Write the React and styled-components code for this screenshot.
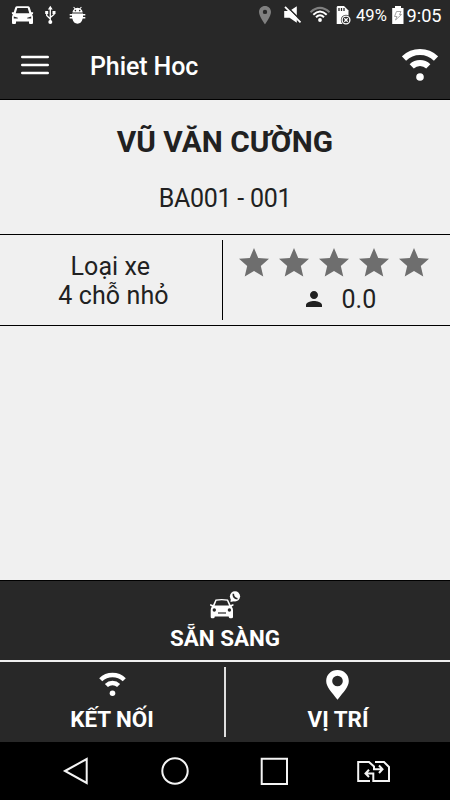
import React from 'react';
import styled, { createGlobalStyle } from 'styled-components';

const GlobalStyle = createGlobalStyle`
  * { box-sizing: border-box; }
  body {
    margin: 0;
    background: #000;
    font-family: Roboto, "Noto Sans", sans-serif;
  }
  svg { display: block; flex: none; }
`
const Screen = styled.div`
  width: 450px;
  height: 800px;
  display: flex;
  flex-direction: column;
  background: #f0f0f0;
  color: #212121;
  overflow: hidden;
`
const StatusBar = styled.div`
  height: 32px;
  display: flex;
  align-items: center;
  padding: 0 8px 2px 11px;
  background: #282828;
  color: #fff;
`
const StatusIcon = styled.svg`
  margin-left: ${props => props.$gap || 0}px;
`
const StatusText = styled.span`
  width: ${props => props.$width}px;
  margin-left: ${props => props.$gap}px;
  font-size: ${props => props.$size}px;
  line-height: 30px;
  padding-top: 2px;
  white-space: nowrap;
`
const Header = styled.header`
  height: 68px;
  display: flex;
  align-items: center;
  padding: 0 12px 1px 20px;
  background: #282828;
  border-bottom: 1px solid #000;
`
const Title = styled.h1`
  flex: 1;
  margin: 4px 0 0 40px;
  color: #fff;
  font-size: 25px;
  font-weight: 500;
  line-height: 30px;
  letter-spacing: -.1px;
`
const Driver = styled.section`
  height: 135px;
  padding-top: 24px;
  text-align: center;
  border-bottom: 1px solid #000;
`
const DriverName = styled.h2`
  margin: 0;
  font-size: 29.8px;
  font-weight: 700;
  line-height: 36px;
`
const DriverCode = styled.p`
  margin: 24px 0 0;
  font-size: 25px;
  font-weight: 400;
  line-height: 30px;
  letter-spacing: -.25px;
`
const Details = styled.section`
  height: 91px;
  display: flex;
  align-items: center;
  border-bottom: 1px solid #000;
`
const CarType = styled.div`
  width: 223px;
  height: 80px;
  padding: 12px 0 0 5px;
  border-right: 1px solid #000;
  text-align: center;
  font-size: 25px;
  line-height: 29px;
  letter-spacing: .1px;
`
const Rating = styled.div`
  flex: 1;
  height: 80px;
  padding: 5px 0 0 12.5px;
`
const Stars = styled.div`
  display: flex;
  gap: 4px;
`
const Score = styled.div`
  display: flex;
  align-items: center;
  height: 30px;
  margin-top: 3px;
  padding-left: 66px;
  gap: 16px;
  font-size: 25px;
`
const Content = styled.main`
  flex: 1;
`
const Actions = styled.footer`
  height: 162px;
  background: #282828;
  border-top: 1px solid #000;
`
const Action = styled.button`
  flex: 1;
  width: ${props => props.$wide ? '100%' : 'auto'};
  height: ${props => props.$wide ? 79 : 80}px;
  padding: ${props => props.$top}px 0 0;
  display: flex;
  flex-direction: column;
  align-items: center;
  border: 0;
  background: none;
  color: #fff;
  font-family: inherit;
`
const ActionLabel = styled.span`
  margin-top: ${props => props.$gap}px;
  font-size: 22.4px;
  font-weight: 700;
  line-height: 28px;
`
const ActionRow = styled.div`
  height: 82px;
  display: flex;
  border-top: 2px solid #f0f0f0;
`
const Divider = styled.div`
  width: 2px;
  height: 70px;
  margin-top: 5px;
  background: #dedede;
`
const NavBar = styled.nav`
  height: 58px;
  display: flex;
  align-items: center;
  padding-left: 62px;
  background: #000;
`
const NavIcon = styled.svg`
  margin-left: ${props => props.$gap || 0}px;
  fill: none;
  stroke: #f4f4f4;
  stroke-width: 2;
`

const Wifi = ({ width, height }) => (
  <svg width={width} height={height} viewBox="402 48 36 34" fill="none" stroke="#fff" strokeWidth="6">
    <path d="M404 58.5A23 23 0 0 1 436 58.5" />
    <path d="M411.7 66.4A12 12 0 0 1 428.3 66.4" />
    <circle cx="420" cy="77" r="3.8" fill="#fff" stroke="none" />
  </svg>
)

const Star = () => (
  <svg width="36" height="36" viewBox="0 0 24 24" fill="#6e6e6e">
    <path d="M12 17.27L18.18 21l-1.64-7.03L22 9.24l-7.19-.61L12 2 9.19 8.63 2 9.24l5.46 4.73L5.82 21z" />
  </svg>
)

const Person = () => (
  <svg width="24" height="24" viewBox="0 0 24 24" fill="#212121">
    <path d="M12 12c2.21 0 4-1.79 4-4s-1.79-4-4-4-4 1.79-4 4 1.79 4 4 4zm0 2c-2.67 0-8 1.34-8 4v2h16v-2c0-2.66-5.33-4-8-4z" />
  </svg>
)

const CarCall = () => (
  <svg width="32" height="29" viewBox="209 589 32 29">
    <path fill="#fff" d="M215.5 598.5Q221.500 597.300 228 598.500L230.600 604L233.300 602.900L233.600 604.400L231.700 605.500Q233 607 233 609V616Q233 617.300 231.500 617.300H230Q228.700 617.300 228.700 615.500H214.800Q214.800 617.300 213.500 617.300H212Q210.700 617.300 210.700 616V609Q210.700 607 211.900 605.500L210 604.400L210.300 602.900L213 604Z" />
    <path fill="#282828" d="M216.500 599.800Q221.700 598.900 227 599.800L229 604.600H214.600Z" />
    <circle cx="214.300" cy="609" r="1.700" fill="#282828" />
    <circle cx="229.400" cy="609" r="1.700" fill="#282828" />
    <path fill="none" stroke="#282828" strokeWidth="1.200" d="M218 612H226" />
    <circle cx="235" cy="595.300" r="5.100" fill="#fff" />
    <path fill="#fff" d="M230.500 601L231 596L235 600Z" />
    <path fill="none" stroke="#282828" strokeWidth="1.600" d="M233.300 592.700Q233 597 237.500 597.700" />
  </svg>
)

const Pin = () => (
  <svg width="24" height="30" viewBox="326 670 24 30">
    <path fill="#fff" fillRule="evenodd" d="M337.500 670C331 670 326.200 674.700 326.200 681C326.200 687 331.500 692 337.500 699.700C343.500 692 348.800 687 348.800 681C348.800 674.700 344 670 337.500 670ZM337.500 675.700A5.300 5.300 0 1 1 337.500 686.300A5.300 5.300 0 1 1 337.500 675.700Z" />
  </svg>
)

export default function App() {
  return (
    <>
      <GlobalStyle />
      <Screen>
        <StatusBar>
          <StatusIcon width="23" height="20" viewBox="11 5 23 20">
            <path fill="#fff" d="M17 6.300H28Q29.300 6.300 29.800 7.600L31.300 12.300L33.200 12.300L33 14L32 14.500Q33 15.500 33 17V23Q33 24 32 24H30Q29 24 29 23V21.500H16V23Q16 24 15 24H13Q12 24 12 23V17Q12 15.500 13 14.500L12 14L11.800 12.300H13.700L15.200 7.600Q15.700 6.300 17 6.300Z" />
            <path fill="#282828" d="M17.300 8H27.700L29.300 13.200H15.700ZM13.800 16.500L17.800 17.700V18.500H13.800ZM31.200 16.500L27.200 17.700V18.500H31.200Z" />
          </StatusIcon>
          <StatusIcon $gap={10} width="12" height="20" viewBox="44 5 12 20" fill="none" stroke="#fff" strokeWidth="1.300">
            <path d="M50.300 8V22M46.700 12V15.500L50.300 19M54 12V14.500L50.300 17.500" />
            <path fill="#fff" stroke="none" d="M50.300 5.800L52.700 9.500H47.900ZM45.200 11H48.200V14H45.200ZM52.500 11H55.500V14H52.500Z" />
            <circle cx="50.300" cy="22" r="2" fill="#fff" stroke="none" />
          </StatusIcon>
          <StatusIcon $gap={13} width="17" height="20" viewBox="69 5 17 20">
            <path fill="#fff" d="M72.500 12.500C72.500 10.800 73.500 9.500 74.500 8.800L73.200 7.200L74 6.700L75.300 8.200Q77.500 7.500 79.700 8.200L81 6.700L81.800 7.200L80.500 8.800C81.700 9.500 82.600 10.800 82.600 12.500ZM69.700 14H72V13.500H83V14H85.300V15.600H83V17H85.300V18.600H82.700C82 22 80 23.800 77.500 23.800S73 22 72.300 18.600H69.700V17H72V15.600H69.700Z" />
            <circle cx="75.400" cy="10.600" r=".8" fill="#282828" />
            <circle cx="79.700" cy="10.600" r=".8" fill="#282828" />
          </StatusIcon>
          <StatusIcon $gap={172} width="14" height="20" viewBox="258 5 14 20">
            <path fill="#808080" fillRule="evenodd" d="M265 5.900C261.600 5.900 259 8.500 259 11.900C259 16 265 24.200 265 24.200S271 16 271 11.900C271 8.500 268.400 5.900 265 5.900ZM265 9.700A2.200 2.200 0 1 1 265 14.100A2.200 2.200 0 1 1 265 9.700Z" />
          </StatusIcon>
          <StatusIcon $gap={11} width="19" height="20" viewBox="283 5 19 20">
            <path fill="#fff" d="M284.200 11H289.500L296.800 6.300V22.700L289.500 17.800H284.200Z" />
            <path fill="none" stroke="#282828" strokeWidth="1.500" d="M286 5.600L302 21.600" />
            <path fill="none" stroke="#fff" strokeWidth="1.700" d="M285 6.800L300.500 22.300" />
          </StatusIcon>
          <StatusIcon $gap={7} width="22" height="20" viewBox="309 5 22 20" fill="none" strokeWidth="2">
            <path stroke="#808080" d="M310.500 12.200Q320 3.500 329.500 12.200" />
            <path stroke="#fff" d="M313.300 14.700Q320 8.300 326.700 14.700M316 17.300Q320 13.300 324 17.300" />
            <circle cx="320" cy="20" r="1.900" fill="#fff" />
          </StatusIcon>
          <StatusIcon $gap={4} width="17" height="20" viewBox="335 5 17 20">
            <path fill="#fff" d="M337.500 6H344L348.500 10.500V24H336.700V7Z" />
            <path stroke="#282828" strokeWidth="1.300" d="M339 8V11M341.500 8V11M344 8V11" />
            <circle cx="346" cy="20" r="5.200" fill="#282828" />
            <circle cx="346" cy="20" r="3.900" fill="none" stroke="#fff" strokeWidth="1.300" />
            <path stroke="#fff" strokeWidth="1.300" d="M344.300 18.300L347.700 21.700M347.700 18.300L344.300 21.700" />
          </StatusIcon>
          <StatusText $gap={4} $width={34} $size={16.6}>49%</StatusText>
          <StatusIcon $gap={1} width="14" height="20" viewBox="391 5 14 20">
            <path fill="#fff" d="M395 6H401V8H403.500V24H392.200V8H395Z" />
            <path fill="none" stroke="#999" strokeWidth=".9" d="M396.500 11.500H401L399.500 14.500H401.500L395.500 20L397 16.500H394.500Z" />
          </StatusIcon>
          <StatusText $gap={2} $width={36} $size={18.2}>9:05</StatusText>
        </StatusBar>
        <Header>
          <svg width="30" height="22" viewBox="20 54 30 22" stroke="#fff" strokeWidth="2.600" strokeLinecap="round">
            <path d="M22.300 57H47.700M22.300 65H47.700M22.300 73H47.700" />
          </svg>
          <Title>Phiet Hoc</Title>
          <Wifi width={36} height={34} />
        </Header>
        <Driver>
          <DriverName>VŨ VĂN CƯỜNG</DriverName>
          <DriverCode>BA001 - 001</DriverCode>
        </Driver>
        <Details>
          <CarType>Loại xe&nbsp;<br />4 chỗ nhỏ</CarType>
          <Rating>
            <Stars>
              {[1, 2, 3, 4, 5].map(n => <Star key={n} />)}
            </Stars>
            <Score><Person />0.0</Score>
          </Rating>
        </Details>
        <Content />
        <Actions>
          <Action $wide $top={9}>
            <CarCall />
            <ActionLabel $gap={5}>SẴN SÀNG</ActionLabel>
          </Action>
          <ActionRow>
            <Action $top={10}>
              <Wifi width={27} height={25} />
              <ActionLabel $gap={8}>KẾT NỐI</ActionLabel>
            </Action>
            <Divider />
            <Action $top={8}>
              <Pin />
              <ActionLabel $gap={5}>VỊ TRÍ</ActionLabel>
            </Action>
          </ActionRow>
        </Actions>
        <NavBar>
          <NavIcon width="27" height="30" viewBox="62 756 27 30">
            <path d="M65 771L86.700 759V783Z" />
          </NavIcon>
          <NavIcon $gap={71} width="30" height="30" viewBox="160 756 30 30">
            <circle cx="175" cy="771" r="12.700" />
          </NavIcon>
          <NavIcon $gap={69} width="30" height="30" viewBox="259 756 30 30">
            <path d="M261.700 758.700H287V784H261.700Z" />
          </NavIcon>
          <NavIcon $gap={67} width="36" height="30" viewBox="356 756 36 30">
            <path d="M370 781H358.200V762H369L374 766.500V769.200H382M379 765.500L382.500 769.200L379 773" />
            <path d="M375 762H384L389 767V781H373.300V773.500H366M369 769.700L365.500 773.500L369 777" />
          </NavIcon>
        </NavBar>
      </Screen>
    </>
  );
}
